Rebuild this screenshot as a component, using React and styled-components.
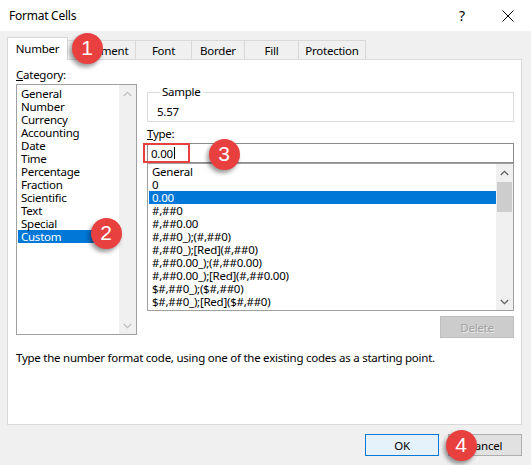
import React from "react";
import styled, { createGlobalStyle } from "styled-components";

const Global = createGlobalStyle`
  html, body { margin: 0; padding: 0; background: #f0f0f0; }
  * { box-sizing: border-box; }
`;

const FONT = `"Noto Sans", "Liberation Sans", sans-serif`;

const Dialog = styled.div`
  position: relative;
  width: 531px;
  height: 465px;
  background: #f0f0f0;
  display: flex;
  flex-direction: column;
  font-family: ${FONT};
  font-size: 11.5px;
  letter-spacing: -0.25px;
  color: #000;
  overflow: hidden;
`;

const TitleBar = styled.div`
  height: 31px;
  background: #fff;
  display: flex;
  align-items: center;
  padding-left: 9px;
  flex-shrink: 0;
`;

const Title = styled.div`
  flex: 1;
  font-size: 12px;
`;

const CaptionBtn = styled.div`
  width: 46px;
  height: 31px;
  display: flex;
  align-items: center;
  justify-content: center;
  font-size: 14px;
`;

const Body = styled.div`
  display: flex;
  flex-direction: column;
  padding: 6px 9px 0 7px;
`;

const TabStrip = styled.div`
  display: flex;
  align-items: flex-end;
  height: 22px;
`;

const Tab = styled.div`
  width: ${(p) => p.$w}px;
  height: ${(p) => (p.$active ? 23 : 19)}px;
  margin-left: ${(p) => (p.$first ? 0 : -1)}px;
  margin-bottom: ${(p) => (p.$active ? -1 : 0)}px;
  background: ${(p) => (p.$active ? "#fff" : "#f0f0f0")};
  border: 1px solid #d9d9d9;
  border-bottom: none;
  position: relative;
  z-index: ${(p) => (p.$active ? 2 : 1)};
  display: flex;
  align-items: center;
  justify-content: center;
  padding-bottom: ${(p) => (p.$active ? 2 : 0)}px;
  white-space: nowrap;
`;

const Panel = styled.div`
  height: 366px;
  background: #fff;
  border: 1px solid #d9d9d9;
  padding: 8px 7px 0 8px;
  display: flex;
  flex-direction: column;
`;

const Columns = styled.div`
  display: flex;
  gap: 10px;
`;

const LeftCol = styled.div`
  width: 121px;
  display: flex;
  flex-direction: column;
`;

const RightCol = styled.div`
  width: 367px;
  display: flex;
  flex-direction: column;
`;

const Label = styled.div`
  line-height: 14px;
  height: 14px;
  margin-top: ${(p) => p.$mt || 0}px;
`;

const ListBox = styled.div`
  height: ${(p) => p.$h}px;
  margin-top: ${(p) => p.$mt || 0}px;
  border: 1px solid #a0a0a0;
  display: flex;
  background: #fff;
`;

const Items = styled.div`
  flex: 1;
  padding-top: ${(p) => p.$pt}px;
  overflow: hidden;
`;

const Item = styled.div`
  height: 13px;
  line-height: 13px;
  margin-left: 1px;
  padding-left: 3px;
  white-space: nowrap;
  background: ${(p) => (p.$sel ? "#0078d7" : "transparent")};
  color: ${(p) => (p.$sel ? "#fff" : "#000")};
`;

const ScrollBar = styled.div`
  width: 17px;
  background: #f0f0f0;
  display: flex;
  flex-direction: column;
  align-items: center;
`;

const ArrowBtn = styled.div`
  height: 17px;
  width: 17px;
  display: flex;
  align-items: center;
  justify-content: center;
  color: ${(p) => (p.$disabled ? "#c0c0c0" : "#606060")};
`;

const Track = styled.div`
  flex: 1;
  width: 100%;
  padding: 1px 1px 0 1px;
`;

const Thumb = styled.div`
  height: 30px;
  background: #cdcdcd;
`;

const Sample = styled.fieldset`
  margin: 17px 0 0 0;
  padding: 6px 9px 2px 9px;
  border: 1px solid #dcdcdc;
  min-width: 0;
`;

const Legend = styled.legend`
  padding: 0 2px;
  margin-left: 3px;
  line-height: 14px;
`;

const SampleValue = styled.div`
  line-height: 14px;
  height: 14px;
`;

const InputWrap = styled.div`
  position: relative;
  margin-top: 2px;
`;

const TextInput = styled.div`
  height: 20px;
  border: 1px solid #8c8c8c;
  padding-left: 3px;
  display: flex;
  align-items: center;
`;

const Caret = styled.span`
  display: inline-block;
  width: 1px;
  height: 12px;
  background: #000;
  margin-left: 1px;
`;

const Highlight = styled.div`
  position: absolute;
  left: -4px;
  top: 0;
  width: 47px;
  height: 20px;
  border: 2px solid #e8403f;
`;

const DeleteBtn = styled.div`
  align-self: flex-end;
  margin-top: 5px;
  width: 74px;
  height: 22px;
  background: #cccccc;
  border: 1px solid #bfbfbf;
  color: #a3a3a3;
  display: flex;
  align-items: center;
  justify-content: center;
  text-shadow: 1px 1px 0 #e8e8e8;
`;

const Description = styled.div`
  margin-top: 13px;
  line-height: 14px;
`;

const Footer = styled.div`
  display: flex;
  justify-content: flex-end;
  gap: 9px;
  padding-top: 9px;
`;

const Button = styled.div`
  width: 74px;
  height: 22px;
  display: flex;
  align-items: center;
  justify-content: center;
  background: ${(p) => (p.$default ? "#e5f1fb" : "#e1e1e1")};
  border: 1px solid ${(p) => (p.$default ? "#0078d7" : "#adadad")};
`;

const Badge = styled.div`
  position: absolute;
  left: ${(p) => p.$x - 15.5}px;
  top: ${(p) => p.$y - 15.5}px;
  width: 31px;
  height: 31px;
  border-radius: 50%;
  background: #e8403f;
  color: #fff;
  font-family: "Liberation Sans", Arial, sans-serif;
  font-size: 21px;
  letter-spacing: 0;
  display: flex;
  align-items: center;
  justify-content: center;
  box-shadow: -2px 3px 4px rgba(0, 0, 0, 0.4);
  z-index: 10;
`;

const Chevron = ({ down }) => (
  <svg width="9" height="6" viewBox="0 0 9 6">
    <polyline
      points={down ? "0.8,1 4.5,4.6 8.2,1" : "0.8,5 4.5,1.4 8.2,5"}
      fill="none"
      stroke="currentColor"
      strokeWidth="1.3"
    />
  </svg>
);

const categories = [
  "General", "Number", "Currency", "Accounting", "Date", "Time",
  "Percentage", "Fraction", "Scientific", "Text", "Special", "Custom",
];

const types = [
  "General", "0", "0.00", "#,##0", "#,##0.00", "#,##0_);(#,##0)",
  "#,##0_);[Red](#,##0)", "#,##0.00_);(#,##0.00)",
  "#,##0.00_);[Red](#,##0.00)", "$#,##0_);($#,##0)",
  "$#,##0_);[Red]($#,##0)",
];

const tabs = [
  { name: "Number", w: 61, active: true },
  { name: "Alignment", w: 69 },
  { name: "Font", w: 57 },
  { name: "Border", w: 54 },
  { name: "Fill", w: 55 },
  { name: "Protection", w: 68 },
];

export default function App() {
  return (
    <>
      <Global />
      <Dialog>
        <TitleBar>
          <Title>Format Cells</Title>
          <CaptionBtn>?</CaptionBtn>
          <CaptionBtn>
            <svg width="12" height="12" viewBox="0 0 12 12">
              <path d="M0.5 0.5 L11.5 11.5 M11.5 0.5 L0.5 11.5" stroke="#000" strokeWidth="1" />
            </svg>
          </CaptionBtn>
        </TitleBar>
        <Body>
          <TabStrip>
            {tabs.map((t, i) => (
              <Tab key={t.name} $w={t.w} $active={t.active} $first={i === 0}>
                {t.name}
              </Tab>
            ))}
          </TabStrip>
          <Panel>
            <Columns>
              <LeftCol>
                <Label>
                  <u>C</u>ategory:
                </Label>
                <ListBox $h={251} $mt={2}>
                  <Items $pt={2}>
                    {categories.map((c) => (
                      <Item key={c} $sel={c === "Custom"}>{c}</Item>
                    ))}
                  </Items>
                  <ScrollBar>
                    <ArrowBtn $disabled><Chevron /></ArrowBtn>
                    <Track />
                    <ArrowBtn $disabled><Chevron down /></ArrowBtn>
                  </ScrollBar>
                </ListBox>
              </LeftCol>
              <RightCol>
                <Sample>
                  <Legend>Sample</Legend>
                  <SampleValue>5.57</SampleValue>
                </Sample>
                <Label $mt={5}>
                  <u>T</u>ype:
                </Label>
                <InputWrap>
                  <TextInput>
                    0.00<Caret />
                  </TextInput>
                  <Highlight />
                </InputWrap>
                <ListBox $h={148}>
                  <Items $pt={1}>
                    {types.map((t) => (
                      <Item key={t} $sel={t === "0.00"}>{t}</Item>
                    ))}
                  </Items>
                  <ScrollBar>
                    <ArrowBtn><Chevron /></ArrowBtn>
                    <Track>
                      <Thumb />
                    </Track>
                    <ArrowBtn><Chevron down /></ArrowBtn>
                  </ScrollBar>
                </ListBox>
                <DeleteBtn>Delete</DeleteBtn>
              </RightCol>
            </Columns>
            <Description>
              Type the number format code, using one of the existing codes as a starting point.
            </Description>
          </Panel>
          <Footer>
            <Button $default>OK</Button>
            <Button>Cancel</Button>
          </Footer>
        </Body>
        <Badge $x={87} $y={48}>1</Badge>
        <Badge $x={106} $y={233}>2</Badge>
        <Badge $x={224} $y={154}>3</Badge>
        <Badge $x={461} $y={445}>4</Badge>
      </Dialog>
    </>
  );
}
